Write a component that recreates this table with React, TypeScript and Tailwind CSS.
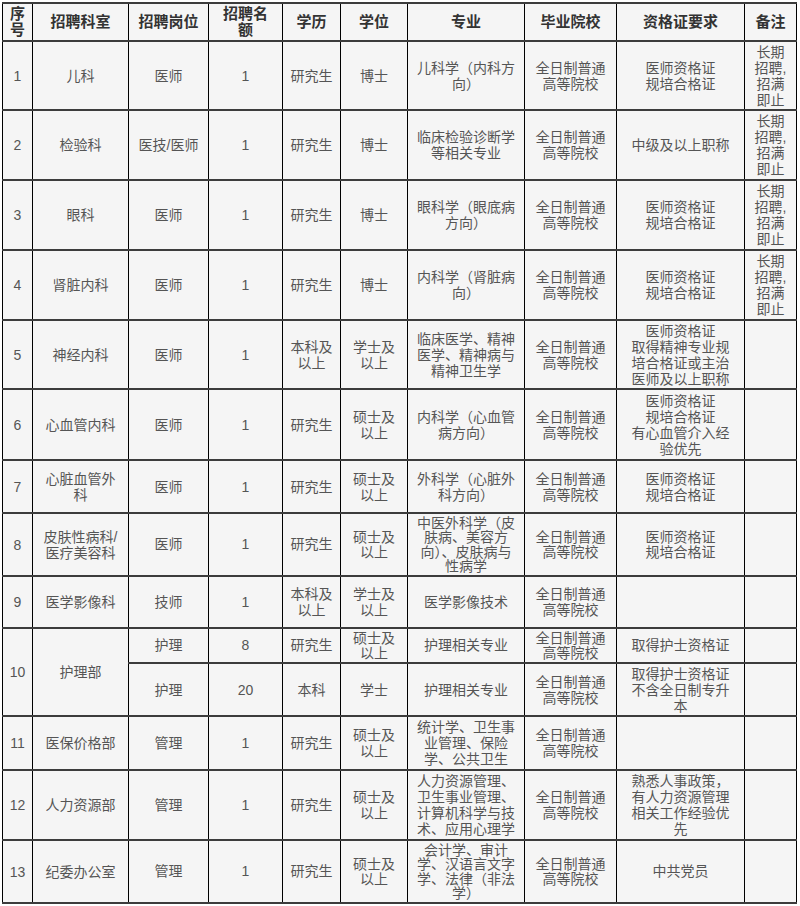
import React from "react"

type Row = {
  no?: string
  dept?: string
  span?: number
  post: string
  count: string
  edu: string[]
  degree: string[]
  major: string[]
  school: string[]
  cert: string[]
  note: string[]
  h: string
  tight?: boolean
}

const school = ["全日制普通", "高等院校"]
const longTerm = ["长期", "招聘,", "招满", "即止"]
const yishi = ["医师资格证", "规培合格证"]
const shuoshi = ["硕士及", "以上"]

const rows: Row[] = [
  { no: "1", dept: "儿科", post: "医师", count: "1", edu: ["研究生"], degree: ["博士"], major: ["儿科学（内科方", "向）"], school, cert: yishi, note: longTerm, h: "h-[69px]" },
  { no: "2", dept: "检验科", post: "医技/医师", count: "1", edu: ["研究生"], degree: ["博士"], major: ["临床检验诊断学", "等相关专业"], school, cert: ["中级及以上职称"], note: longTerm, h: "h-[70px]" },
  { no: "3", dept: "眼科", post: "医师", count: "1", edu: ["研究生"], degree: ["博士"], major: ["眼科学（眼底病", "方向）"], school, cert: yishi, note: longTerm, h: "h-[70px]" },
  { no: "4", dept: "肾脏内科", post: "医师", count: "1", edu: ["研究生"], degree: ["博士"], major: ["内科学（肾脏病", "向）"], school, cert: yishi, note: longTerm, h: "h-[70px]" },
  { no: "5", dept: "神经内科", post: "医师", count: "1", edu: ["本科及", "以上"], degree: ["学士及", "以上"], major: ["临床医学、精神", "医学、精神病与", "精神卫生学"], school, cert: ["医师资格证", "取得精神专业规", "培合格证或主治", "医师及以上职称"], note: [], h: "h-[69px]" },
  { no: "6", dept: "心血管内科", post: "医师", count: "1", edu: ["研究生"], degree: shuoshi, major: ["内科学（心血管", "病方向）"], school, cert: ["医师资格证", "规培合格证", "有心血管介入经", "验优先"], note: [], h: "h-[71px]" },
  { no: "7", dept: "心脏血管外科", post: "医师", count: "1", edu: ["研究生"], degree: shuoshi, major: ["外科学（心脏外", "科方向）"], school, cert: yishi, note: [], h: "h-[53px]" },
  { no: "8", dept: "皮肤性病科/医疗美容科", post: "医师", count: "1", edu: ["研究生"], degree: shuoshi, major: ["中医外科学（皮", "肤病、美容方", "向）、皮肤病与", "性病学"], school, cert: yishi, note: [], h: "h-[63px]", tight: true },
  { no: "9", dept: "医学影像科", post: "技师", count: "1", edu: ["本科及", "以上"], degree: ["学士及", "以上"], major: ["医学影像技术"], school, cert: [], note: [], h: "h-[52px]" },
  { no: "10", dept: "护理部", span: 2, post: "护理", count: "8", edu: ["研究生"], degree: shuoshi, major: ["护理相关专业"], school, cert: ["取得护士资格证"], note: [], h: "h-[35px]", tight: true },
  { post: "护理", count: "20", edu: ["本科"], degree: ["学士"], major: ["护理相关专业"], school, cert: ["取得护士资格证", "不含全日制专升", "本"], note: [], h: "h-[53px]" },
  { no: "11", dept: "医保价格部", post: "管理", count: "1", edu: ["研究生"], degree: shuoshi, major: ["统计学、卫生事", "业管理、保险", "学、公共卫生"], school, cert: [], note: [], h: "h-[54px]" },
  { no: "12", dept: "人力资源部", post: "管理", count: "1", edu: ["研究生"], degree: shuoshi, major: ["人力资源管理、", "卫生事业管理、", "计算机科学与技", "术、应用心理学"], school, cert: ["熟悉人事政策，", "有人力资源管理", "相关工作经验优", "先"], note: [], h: "h-[70px]" },
  { no: "13", dept: "纪委办公室", post: "管理", count: "1", edu: ["研究生"], degree: shuoshi, major: ["会计学、审计", "学、汉语言文字", "学、法律（非法", "学）"], school, cert: ["中共党员"], note: [], h: "h-[63px]", tight: true },
]

const cell = "border-x border-x-black border-y-2 border-y-[#3c3c3c] bg-[#f5f5f5] p-0 text-center align-middle"

const Lines = ({ items }: { items: string[] }) => (
  <>
    {items.map((t, i) => (
      <div key={i} className="whitespace-nowrap">{t}</div>
    ))}
  </>
)

const deptLines = (d: string) => {
  if (d === "皮肤性病科/医疗美容科") return ["皮肤性病科/", "医疗美容科"]
  if (d === "心脏血管外科") return ["心脏血管外", "科"]
  return [d]
}

export default function App() {
  return (
    <div className="min-h-[906px] w-[800px] bg-white pl-[2px] pt-[2px]">
      <table
        className="w-[794px] table-fixed border-collapse text-[14px] leading-[16px] text-[#555]"
        style={{ fontFamily: '"Liberation Sans", "Noto Sans CJK SC", sans-serif' }}
      >
        <colgroup>
          <col className="w-[30px]" />
          <col className="w-[96px]" />
          <col className="w-[80px]" />
          <col className="w-[74px]" />
          <col className="w-[58px]" />
          <col className="w-[67px]" />
          <col className="w-[117px]" />
          <col className="w-[92px]" />
          <col className="w-[128px]" />
          <col className="w-[52px]" />
        </colgroup>
        <thead>
          <tr className="h-[38px] text-[15px] font-bold text-[#333]">
            <th className={cell}>
              <div>序</div>
              <div>号</div>
            </th>
            <th className={cell}>招聘科室</th>
            <th className={cell}>招聘岗位</th>
            <th className={cell}>
              <div>招聘名</div>
              <div>额</div>
            </th>
            <th className={cell}>学历</th>
            <th className={cell}>学位</th>
            <th className={cell}>专业</th>
            <th className={cell}>毕业院校</th>
            <th className={cell}>资格证要求</th>
            <th className={cell}>备注</th>
          </tr>
        </thead>
        <tbody>
          {rows.map((r, i) => {
            const c = r.tight ? cell + " leading-[14.5px]" : cell
            return (
              <tr key={i} className={r.h}>
                {r.no && (
                  <td rowSpan={r.span} className={cell}>
                    {r.no}
                  </td>
                )}
                {r.dept && (
                  <td rowSpan={r.span} className={cell}>
                    <Lines items={deptLines(r.dept)} />
                  </td>
                )}
                <td className={c}>{r.post}</td>
                <td className={c}>{r.count}</td>
                <td className={c}>
                  <Lines items={r.edu} />
                </td>
                <td className={c}>
                  <Lines items={r.degree} />
                </td>
                <td className={c}>
                  <Lines items={r.major} />
                </td>
                <td className={c}>
                  <Lines items={r.school} />
                </td>
                <td className={c}>
                  <Lines items={r.cert} />
                </td>
                <td className={c}>
                  <Lines items={r.note} />
                </td>
              </tr>
            )
          })}
        </tbody>
      </table>
    </div>
  )
}
